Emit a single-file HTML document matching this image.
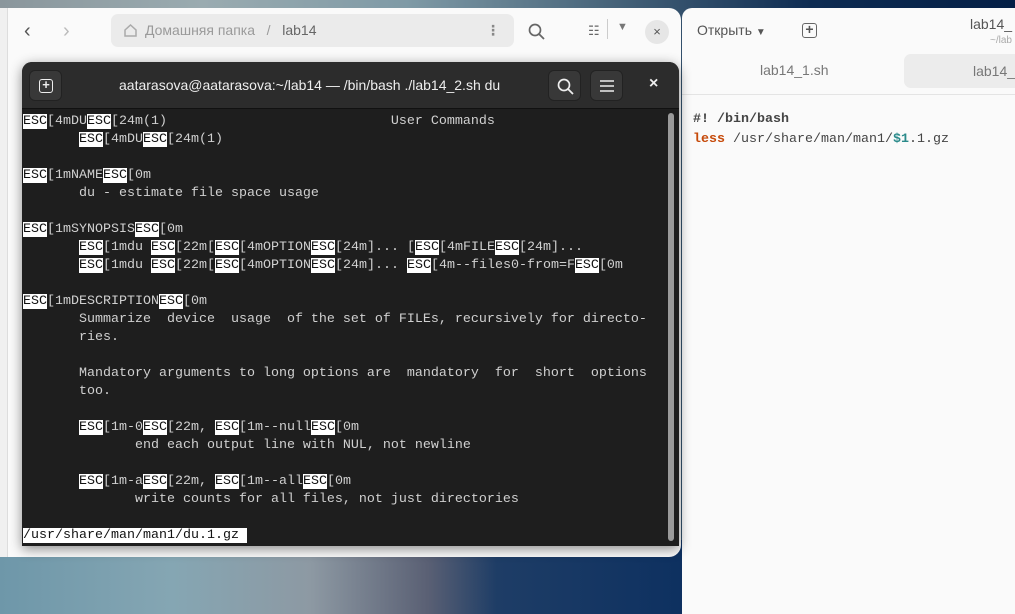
<!DOCTYPE html>
<html><head><meta charset="utf-8"><style>
*{margin:0;padding:0;box-sizing:border-box}
body{width:1015px;height:614px;overflow:hidden;position:relative;font-family:"Liberation Sans","DejaVu Sans",sans-serif;
background:linear-gradient(90deg,#8a969c 0%,#9aabb0 20%,#7f9aa6 40%,#47647a 60%,#0e2c52 80%,#041f46 100%);}
.bottombg{position:absolute;left:0;top:540px;width:690px;height:74px;background:linear-gradient(90deg,#6e97a9 0%,#85a6b3 25%,#8d99a3 45%,#5a6074 62%,#1e3d66 72%,#0d3060 100%)}
.fm{position:absolute;left:0;top:8px;width:681px;height:549px;background:#fafafa;border-radius:0 12px 12px 0;}
.fm .sidebar{position:absolute;left:0;top:0;width:8px;height:100%;background:#f0f0f0;border-right:1px solid #ddd}
.path{position:absolute;left:111px;top:6px;width:403px;height:33px;background:#ebebeb;border-radius:7px;font-size:14px;color:#9a9a9a;line-height:33px;padding-left:34px}
.ed{position:absolute;left:682px;top:8px;width:340px;height:606px;background:#fafafa;border-radius:10px 0 0 0}
.term{position:absolute;left:22px;top:62px;width:657px;height:484px;background:#1e1e1e;border-radius:10px 10px 0 0;box-shadow:0 3px 12px rgba(0,0,0,.45)}
.th{height:47px;background:#2c2c2c;border-radius:10px 10px 0 0;border-bottom:1px solid #111;position:relative;color:#eee}
.btn{position:absolute;top:8px;width:33px;height:31px;background:#383838;border-radius:6px;border:1px solid #222}
.tb{position:absolute;left:1px;top:51px;font-family:"Liberation Mono","DejaVu Sans Mono",monospace;font-size:13.33px;line-height:18px;color:#d0d0d0;white-space:pre}
.e{background:#fff;color:#111}
.sb{position:absolute;right:5px;top:51px;width:6px;height:428px;background:#9a9a9a;border-radius:3px}
</style></head><body>
<div class="bottombg"></div>
<div class="fm"><div class="sidebar"></div>
<div style="position:absolute;left:24px;top:12px;font-size:20px;color:#555">&#8249;</div>
<div style="position:absolute;left:63px;top:12px;font-size:20px;color:#bbb">&#8250;</div>
<div class="path"><svg style="position:absolute;left:12px;top:9px" width="15" height="15" viewBox="0 0 15 15"><path d="M2 7L7.5 2L13 7V13H2Z" fill="none" stroke="#aaa" stroke-width="1.5"/></svg>Домашняя папка &nbsp; / &nbsp; <span style="color:#666">lab14</span>
<span style="position:absolute;right:14px;top:0;color:#888;font-weight:bold">⋮</span></div>
<svg style="position:absolute;left:528px;top:15px" width="18" height="18"><circle cx="7" cy="7" r="5.5" fill="none" stroke="#666" stroke-width="1.7"/><path d="M11 11L16 16" stroke="#666" stroke-width="1.8"/></svg>
<div style="position:absolute;left:588px;top:15px;font-size:13px;color:#666">☷</div>
<div style="position:absolute;left:607px;top:11px;width:1px;height:20px;background:#ccc"></div>
<div style="position:absolute;left:617px;top:13px;font-size:11px;color:#777">▼</div>
<div style="position:absolute;left:645px;top:12px;width:24px;height:24px;border-radius:50%;background:#e6e6e6;font-size:13px;color:#555;text-align:center;line-height:24px">×</div>
</div>
<div class="ed">
<div style="position:absolute;left:15px;top:14px;font-size:14px;color:#555">Открыть <span style="font-size:10px">▼</span></div>
<div style="position:absolute;left:120px;top:15px;width:15px;height:15px;border:1.5px solid #666;border-radius:3px;font-size:14px;line-height:11px;text-align:center;color:#555;font-weight:bold">+</div>
<div style="position:absolute;left:288px;top:8px;font-size:14px;color:#555">lab14_</div>
<div style="position:absolute;left:308px;top:27px;font-size:10px;color:#aaa">~/lab</div>
<div style="position:absolute;left:78px;top:54px;font-size:14px;color:#777">lab14_1.sh</div>
<div style="position:absolute;left:222px;top:46px;width:130px;height:34px;background:#ececec;border-radius:7px;font-size:14px;color:#777;line-height:34px;padding-left:69px">lab14_</div>
<div style="position:absolute;left:0;top:86px;width:340px;height:1px;background:#e4e4e4"></div>
<div style="position:absolute;left:11px;top:102px;font-family:'Liberation Mono',monospace;font-size:13.33px;line-height:20px;color:#444;white-space:pre"><b>#! /bin/bash</b>
<b style="color:#c64a0a">less</b> /usr/share/man/man1/<b style="color:#2a8a8a">$1</b>.1.gz</div>
</div>
<div class="term">
<div class="th">
<div class="btn" style="left:7px"><div style="position:absolute;left:9px;top:8px;width:14px;height:14px;border:1.5px solid #eee;border-radius:3px;font-size:13px;line-height:10px;text-align:center;font-weight:bold">+</div></div>
<div style="position:absolute;left:97px;top:15px;font-size:14px;color:#eee">aatarasova@aatarasova:~/lab14 — /bin/bash ./lab14_2.sh du</div>
<div class="btn" style="left:526px"><svg style="position:absolute;left:8px;top:7px" width="18" height="18"><circle cx="7" cy="7" r="5.5" fill="none" stroke="#eee" stroke-width="1.7"/><path d="M11 11L16 16" stroke="#eee" stroke-width="1.8"/></svg></div>
<div class="btn" style="left:568px"><svg style="position:absolute;left:8px;top:8px" width="16" height="14"><path d="M1 2H15M1 7H15M1 12H15" stroke="#eee" stroke-width="1.6"/></svg></div>
<div style="position:absolute;left:627px;top:13px;font-size:16px;font-weight:bold">×</div>
</div>
<div class="tb"><span class="e">ESC</span>[4mDU<span class="e">ESC</span>[24m(1)                            User Commands
       <span class="e">ESC</span>[4mDU<span class="e">ESC</span>[24m(1)

<span class="e">ESC</span>[1mNAME<span class="e">ESC</span>[0m
       du - estimate file space usage

<span class="e">ESC</span>[1mSYNOPSIS<span class="e">ESC</span>[0m
       <span class="e">ESC</span>[1mdu <span class="e">ESC</span>[22m[<span class="e">ESC</span>[4mOPTION<span class="e">ESC</span>[24m]... [<span class="e">ESC</span>[4mFILE<span class="e">ESC</span>[24m]...
       <span class="e">ESC</span>[1mdu <span class="e">ESC</span>[22m[<span class="e">ESC</span>[4mOPTION<span class="e">ESC</span>[24m]... <span class="e">ESC</span>[4m--files0-from=F<span class="e">ESC</span>[0m

<span class="e">ESC</span>[1mDESCRIPTION<span class="e">ESC</span>[0m
       Summarize  device  usage  of the set of FILEs, recursively for directo-
       ries.

       Mandatory arguments to long options are  mandatory  for  short  options
       too.

       <span class="e">ESC</span>[1m-0<span class="e">ESC</span>[22m, <span class="e">ESC</span>[1m--null<span class="e">ESC</span>[0m
              end each output line with NUL, not newline

       <span class="e">ESC</span>[1m-a<span class="e">ESC</span>[22m, <span class="e">ESC</span>[1m--all<span class="e">ESC</span>[0m
              write counts for all files, not just directories

<span class="e">/usr/share/man/man1/du.1.gz </span></div>
<div class="sb"></div>
</div>
</body></html>
